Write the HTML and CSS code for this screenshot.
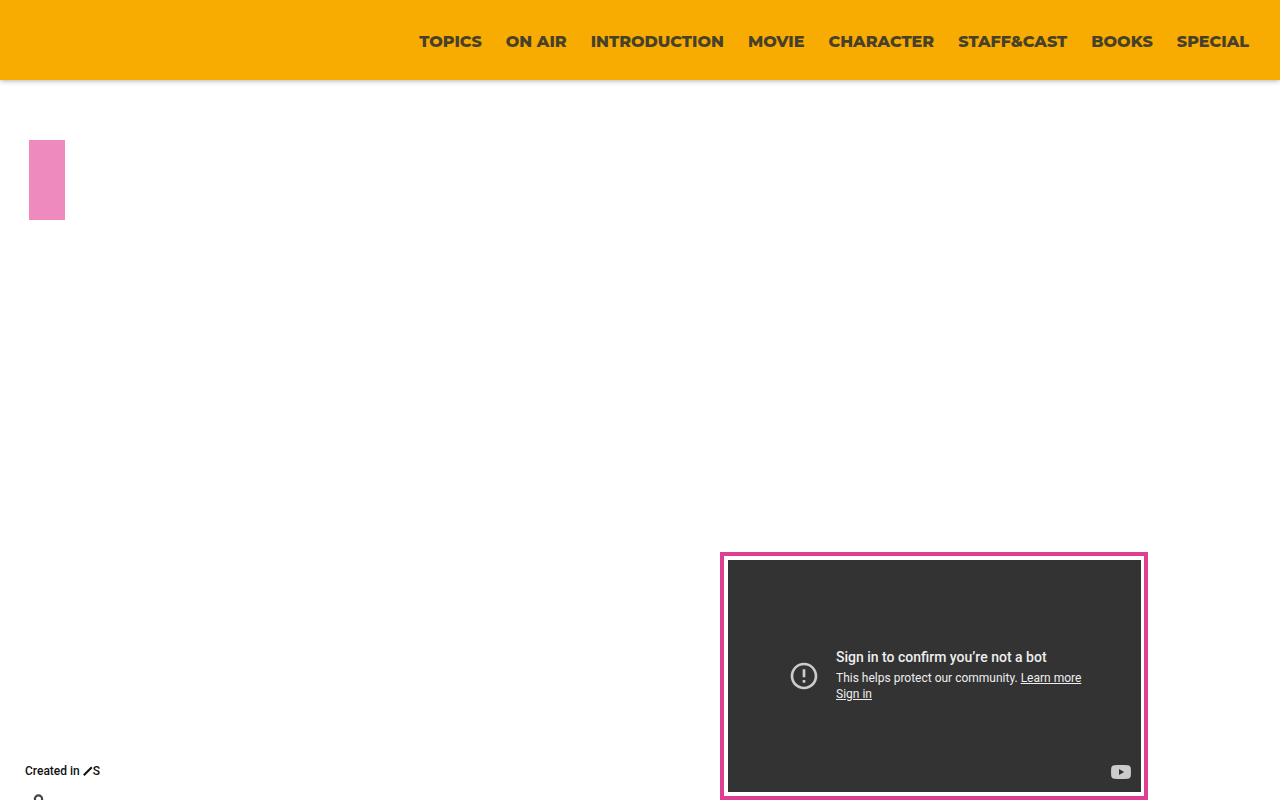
FILE: index.html
```html
<!DOCTYPE html>
<html lang="en">
<head>
<meta charset="utf-8">
<meta name="viewport" content="width=device-width, initial-scale=1">
<title>Topics</title>
<link rel="stylesheet" href="styles.css">
</head>
<body>
<header class="site-header">
  <nav class="site-nav">
    <a href="#topics">TOPICS</a>
    <a href="#onair">ON AIR</a>
    <a href="#introduction">INTRODUCTION</a>
    <a href="#movie">MOVIE</a>
    <a href="#character">CHARACTER</a>
    <a href="#staffcast">STAFF&amp;CAST</a>
    <a href="#books">BOOKS</a>
    <a href="#special">SPECIAL</a>
  </nav>
</header>
<main class="content">
  <aside class="side">
    <div class="side-marker"></div>
    <div class="credit">
      <a class="credit-link" href="#studio">Created in
        <svg class="slash" viewBox="0 0 10 10" aria-hidden="true"><path d="M.8 9.2 8.8 1.2" stroke="currentColor" stroke-width="2" fill="none"/></svg>S</a>
      <svg class="credit-icon" viewBox="0 0 12 12" aria-hidden="true"><circle cx="5.5" cy="5" r="3.6" fill="none" stroke="currentColor" stroke-width="2.2"/></svg>
    </div>
  </aside>
  <section class="video-frame">
    <div class="player">
      <div class="notice">
        <svg class="notice-icon" viewBox="0 0 24 24" aria-hidden="true"><path fill="currentColor" d="M11 15h2v2h-2zm0-8h2v6h-2zm.99-5C6.47 2 2 6.48 2 12s4.47 10 9.99 10C17.52 22 22 17.52 22 12S17.52 2 11.99 2zM12 20c-4.42 0-8-3.58-8-8s3.58-8 8-8 8 3.58 8 8-3.58 8-8 8z"/></svg>
        <div class="notice-text">
          <h2>Sign in to confirm you’re not a bot</h2>
          <p>This helps protect our community. <a href="#learn">Learn more</a></p>
          <p><a href="#signin">Sign in</a></p>
        </div>
      </div>
      <svg class="play-badge" viewBox="0 0 20 14" aria-hidden="true"><path fill="currentColor" fill-rule="evenodd" d="M3 .2Q10-.3 17 .2 19.3.4 19.7 2.5 20.2 7 19.7 11.5 19.3 13.6 17 13.8 10 14.3 3 13.8.7 13.6.3 11.5-.2 7 .3 2.5.7.4 3 .2zM8 4v6l5.2-3z"/></svg>
    </div>
  </section>
</main>
</body>
</html>
```

FILE: styles.css
```css
* {
  box-sizing: border-box;
}

body {
  margin: 0;
  height: 100vh;
  display: flex;
  flex-direction: column;
  overflow: hidden;
  background: #fff;
  font-family: Roboto, sans-serif;
}

.site-header {
  flex: none;
  height: 80px;
  padding: 3px 31px 0;
  display: flex;
  align-items: center;
  justify-content: flex-end;
  background: #f8ab00;
  box-shadow: 0 1px 5px rgba(0, 0, 0, 0.3);
}

.site-nav {
  display: flex;
  gap: 24px;
  font: 800 16px/20px Montserrat, Inter, sans-serif;
}

.site-nav a {
  color: #48412a;
  text-decoration: none;
  white-space: nowrap;
}

.content {
  flex: 1;
  min-height: 0;
  padding: 60px 132px 0 25px;
  display: flex;
  justify-content: space-between;
}

.side {
  display: flex;
  flex-direction: column;
  justify-content: space-between;
}

.side-marker {
  width: 36px;
  height: 80px;
  margin-left: 4px;
  background: #ef8abe;
}

.credit {
  height: 37px;
  overflow: hidden;
}

.credit-link {
  display: block;
  color: #111;
  font: 500 12px/16px Roboto, sans-serif;
  text-decoration: none;
  white-space: nowrap;
}

.slash {
  width: 10px;
  height: 10px;
  vertical-align: -1px;
}

.credit-icon {
  display: block;
  width: 12px;
  height: 12px;
  margin: 15px 0 0 8px;
  color: #444;
}

.video-frame {
  align-self: flex-end;
  width: 39%;
  max-width: 428px;
  padding: 4px 3px 4px 4px;
  border: 4px solid #de3f92;
}

.player {
  min-height: 232px;
  display: grid;
  grid-template-rows: 1fr auto;
  background: #333;
  color: #eee;
}

.notice {
  grid-area: 1 / 1 / 3 / 2;
  align-self: center;
  padding-left: 60px;
  display: flex;
  align-items: center;
  gap: 16px;
}

.notice-icon {
  flex: none;
  width: 32px;
  height: 32px;
  color: #ccc;
}

.notice-text {
  padding-bottom: 2px;
}

.notice-text h2 {
  margin: 0 0 4px;
  font-size: 14px;
  font-weight: 500;
  line-height: 18px;
}

.notice-text p {
  margin: 0;
  font-size: 12px;
  line-height: 16px;
}

.notice-text a {
  color: inherit;
}

.play-badge {
  grid-area: 2 / 1;
  justify-self: end;
  width: 20px;
  height: 14px;
  margin: 0 10px 13px 0;
  color: #ccc;
}
```
